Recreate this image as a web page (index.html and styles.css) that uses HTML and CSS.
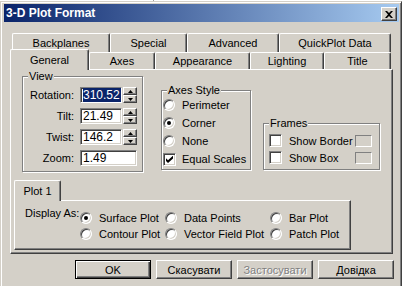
FILE: index.html
```html
<!DOCTYPE html>
<html>
<head>
<meta charset="utf-8">
<title>3-D Plot Format</title>
<link rel="stylesheet" href="styles.css">
</head>
<body>
<div class="topstrip"><span class="topline"></span></div>
<div class="window">
  <div class="titlebar">
    <span class="title">3-D Plot Format</span>
    <span class="close"><svg width="8" height="7" viewBox="0 0 8 7"><path d="M0 0h2l2 2 2-2h2L5 3.5 8 7H6L4 5 2 7H0l3-3.5z" fill="#000"/></svg></span>
  </div>

  <div class="tabrow back">
    <div class="tab t-backplanes">Backplanes</div>
    <div class="tab t-special">Special</div>
    <div class="tab t-advanced">Advanced</div>
    <div class="tab t-quick">QuickPlot Data</div>
  </div>
  <div class="tabrow front">
    <div class="tab active t-general">General</div>
    <div class="tab t-axes">Axes</div>
    <div class="tab t-appearance">Appearance</div>
    <div class="tab t-lighting">Lighting</div>
    <div class="tab t-title">Title</div>
  </div>

  <div class="panel">
    <div class="groups">
      <div class="group view">
        <div class="legend">View</div>
        <div class="fields">
          <div class="flabel">Rotation:</div>
          <div class="field">
            <div class="edit"><span class="sel">310.52</span></div>
            <div class="spin">
              <span><svg width="5" height="3" viewBox="0 0 5 3"><path d="M2.5 0L5 3H0z" fill="#000"/></svg></span>
              <span><svg width="5" height="3" viewBox="0 0 5 3"><path d="M0 0h5L2.5 3z" fill="#000"/></svg></span>
            </div>
          </div>
          <div class="flabel">Tilt:</div>
          <div class="field">
            <div class="edit">21.49</div>
            <div class="spin">
              <span><svg width="5" height="3" viewBox="0 0 5 3"><path d="M2.5 0L5 3H0z" fill="#000"/></svg></span>
              <span><svg width="5" height="3" viewBox="0 0 5 3"><path d="M0 0h5L2.5 3z" fill="#000"/></svg></span>
            </div>
          </div>
          <div class="flabel">Twist:</div>
          <div class="field">
            <div class="edit">146.2</div>
            <div class="spin">
              <span><svg width="5" height="3" viewBox="0 0 5 3"><path d="M2.5 0L5 3H0z" fill="#000"/></svg></span>
              <span><svg width="5" height="3" viewBox="0 0 5 3"><path d="M0 0h5L2.5 3z" fill="#000"/></svg></span>
            </div>
          </div>
          <div class="flabel">Zoom:</div>
          <div class="field">
            <div class="edit wide">1.49</div>
          </div>
        </div>
      </div>

      <div class="group axes">
        <div class="legend">Axes Style</div>
        <div class="opts">
          <div class="opt"><span class="radio"></span>Perimeter</div>
          <div class="opt"><span class="radio on"></span>Corner</div>
          <div class="opt"><span class="radio"></span>None</div>
          <div class="opt"><span class="check"><svg width="7" height="7" viewBox="0 0 7 7"><path d="M0 2.2L2 4.2L7 -0.3V2.5L2 7L0 5z" fill="#000"/></svg></span>Equal Scales</div>
        </div>
      </div>

      <div class="group frames">
        <div class="legend">Frames</div>
        <div class="frows">
          <div class="frow"><span class="check"></span>Show Border<span class="swatch"></span></div>
          <div class="frow"><span class="check"></span>Show Box<span class="swatch"></span></div>
        </div>
      </div>
    </div>

    <div class="subtabs">
      <div class="tab active t-plot">Plot 1</div>
    </div>
    <div class="subpanel">
      <div class="display-label">Display As:</div>
      <div class="plots">
        <div class="opt"><span class="radio on"></span>Surface Plot</div>
        <div class="opt"><span class="radio"></span>Data Points</div>
        <div class="opt"><span class="radio"></span>Bar Plot</div>
        <div class="opt"><span class="radio"></span>Contour Plot</div>
        <div class="opt"><span class="radio"></span>Vector Field Plot</div>
        <div class="opt"><span class="radio"></span>Patch Plot</div>
      </div>
    </div>
  </div>

  <div class="buttons">
    <div class="btn default">OK</div>
    <div class="btn">Скасувати</div>
    <div class="btn disabled">Застосувати</div>
    <div class="btn">Довідка</div>
  </div>
</div>
</body>
</html>
```
FILE: styles.css
```css
* { box-sizing: border-box; }
html, body { margin: 0; padding: 0; }
body {
  width: 408px;
  height: 286px;
  overflow: hidden;
  background: #fff;
  font-family: "Liberation Sans", Arial, sans-serif;
  font-size: 11px;
  color: #000;
}
.topstrip { height: 1px; padding-left: 153px; }
.topline { display: block; width: 1px; height: 1px; background: #a0a0a0; }

.window {
  width: 402px;
  height: 285px;
  background: #d4d0c8;
  border: 1px solid;
  border-bottom: 0;
  border-color: #d4d0c8 #404040 #404040 #d4d0c8;
  box-shadow: inset 1px 1px 0 #fff, inset -1px 0 0 #808080;
  padding: 2px 2px 0 3px;
}

.titlebar {
  height: 18px;
  display: flex;
  align-items: flex-start;
  background: linear-gradient(to right, #0a246a, #a6caf0);
}
.title {
  flex: 1;
  color: #fff;
  font-weight: bold;
  font-size: 12px;
  line-height: 18px;
  padding-left: 2px;
}
.close {
  width: 16px;
  height: 14px;
  margin: 3px 2px 0 0;
  background: #d4d0c8;
  border: 1px solid;
  border-color: #fff #404040 #404040 #fff;
  box-shadow: inset -1px -1px 0 #808080;
  display: flex;
  align-items: center;
  justify-content: center;
  padding-right: 1px;
}
.close svg { display: block; }

.tabrow { display: flex; }
.back { margin: 11px 0 0 8px; height: 19px; }
.front { margin-left: 6px; height: 17px; align-items: flex-end; }

.tab {
  height: 100%;
  background: #d4d0c8;
  border-top: 1px solid #fff;
  border-left: 1px solid #fff;
  border-right: 1px solid #404040;
  box-shadow: inset -1px 0 0 #808080;
  border-radius: 2px 2px 0 0;
  display: flex;
  align-items: center;
  justify-content: center;
  white-space: nowrap;
}
.tab.active {
  position: relative;
  z-index: 2;
  height: 21px;
  margin-bottom: -1px;
}
.t-backplanes { width: 98px; }
.t-special { width: 77px; }
.t-advanced { width: 92px; }
.t-quick { width: 112px; }
.t-general { width: 79px; padding-bottom: 1px; }
.t-axes { width: 66px; }
.t-appearance { width: 95px; }
.t-lighting { width: 74px; }
.t-title { width: 67px; }

.panel {
  margin-left: 6px;
  width: 383px;
  height: 185px;
  border: 1px solid;
  border-color: #fff #404040 #404040 #fff;
  box-shadow: inset -1px -1px 0 #808080;
}

.groups { display: flex; align-items: flex-start; }
.group {
  border: 1px solid #808080;
  box-shadow: inset 1px 1px 0 #fff, 1px 1px 0 #fff;
}
.view { margin: 6px 0 0 11px; width: 121px; height: 96px; }
.axes { margin: 20px 0 0 18px; width: 90px; height: 80px; }
.frames { margin: 53px 0 0 12px; width: 117px; height: 47px; }
.legend {
  display: table;
  margin: -7px 0 0 5px;
  padding: 0 1px;
  height: 13px;
  line-height: 13px;
  background: #d4d0c8;
}

.fields {
  display: grid;
  grid-template-columns: 51px 57px;
  grid-auto-rows: 16px;
  column-gap: 6px;
  row-gap: 5px;
  margin-top: 4px;
}
.flabel { text-align: right; line-height: 16px; }
.field { display: flex; gap: 1px; }
.edit {
  width: 42px;
  height: 16px;
  background: #fff;
  border: 1px solid;
  border-color: #808080 #fff #fff #808080;
  box-shadow: inset 1px 1px 0 #404040, inset -1px -1px 0 #d4d0c8;
  padding: 1px 0 0 2px;
  line-height: 13px;
  font-size: 12px;
}
.edit.wide { width: 57px; }
.sel { background: #0a246a; color: #fff; padding: 0 1px 0 0; }
.spin { width: 14px; height: 16px; display: flex; flex-direction: column; }
.spin span {
  flex: 1;
  background: #d4d0c8;
  border: 1px solid;
  border-color: #fff #404040 #404040 #fff;
  box-shadow: inset -1px -1px 0 #808080;
  display: flex;
  align-items: center;
  justify-content: center;
}
.spin svg { display: block; }

.opts { margin-top: -1px; }
.opt { display: flex; align-items: center; height: 18px; padding-left: 1px; white-space: nowrap; }
.radio {
  flex: none;
  position: relative;
  width: 12px;
  height: 12px;
  margin-right: 7px;
  border-radius: 50%;
  background: #fff;
  border: 1px solid;
  border-color: #808080 #fff #fff #808080;
  box-shadow: inset 1px 1px 0 #404040, inset -1px -1px 0 #d4d0c8;
}
.radio.on::after {
  content: "";
  position: absolute;
  left: 3px;
  top: 3px;
  width: 4px;
  height: 4px;
  border-radius: 50%;
  background: #000;
}
.check {
  flex: none;
  width: 13px;
  height: 13px;
  margin-right: 6px;
  background: #fff;
  border: 1px solid;
  border-color: #808080 #fff #fff #808080;
  box-shadow: inset 1px 1px 0 #404040, inset -1px -1px 0 #d4d0c8;
  display: flex;
  align-items: center;
  justify-content: center;
}
.check svg { display: block; }

.frows { margin-top: 2px; }
.frow { display: flex; align-items: center; height: 17px; padding: 0 7px 0 5px; white-space: nowrap; }
.frow .check { margin-right: 7px; }
.swatch {
  margin-left: auto;
  width: 17px;
  height: 12px;
  border: 1px solid;
  border-color: #808080 #fff #fff #808080;
}

.subtabs { display: flex; align-items: flex-end; height: 19px; margin: 9px 0 0 3px; }
.t-plot { width: 47px; height: 20px; }
.subpanel {
  margin-left: 3px;
  width: 337px;
  height: 50px;
  display: flex;
  border: 1px solid;
  border-color: #fff #404040 #404040 #fff;
  box-shadow: inset -1px -1px 0 #808080;
}
.display-label { margin: 5px 0 0 10px; width: 59px; line-height: 14px; white-space: nowrap; }
.plots {
  margin-top: 9px;
  display: grid;
  grid-template-columns: 85px 105px 80px;
  grid-auto-rows: 16px;
}
.plots .opt { height: 16px; padding-left: 0; }

.buttons { display: flex; justify-content: flex-end; gap: 5px; margin-top: 6px; padding-right: 5px; }
.btn {
  width: 76px;
  height: 19px;
  background: #d4d0c8;
  border: 1px solid;
  border-color: #fff #404040 #404040 #fff;
  box-shadow: inset -1px -1px 0 #808080;
  display: flex;
  align-items: center;
  justify-content: center;
}
.btn.default {
  border: 1px solid #000;
  box-shadow: inset 1px 1px 0 #fff, inset -1px -1px 0 #404040, inset -2px -2px 0 #808080;
}
.btn.disabled { color: #808080; text-shadow: 1px 1px 0 #fff; }
```
